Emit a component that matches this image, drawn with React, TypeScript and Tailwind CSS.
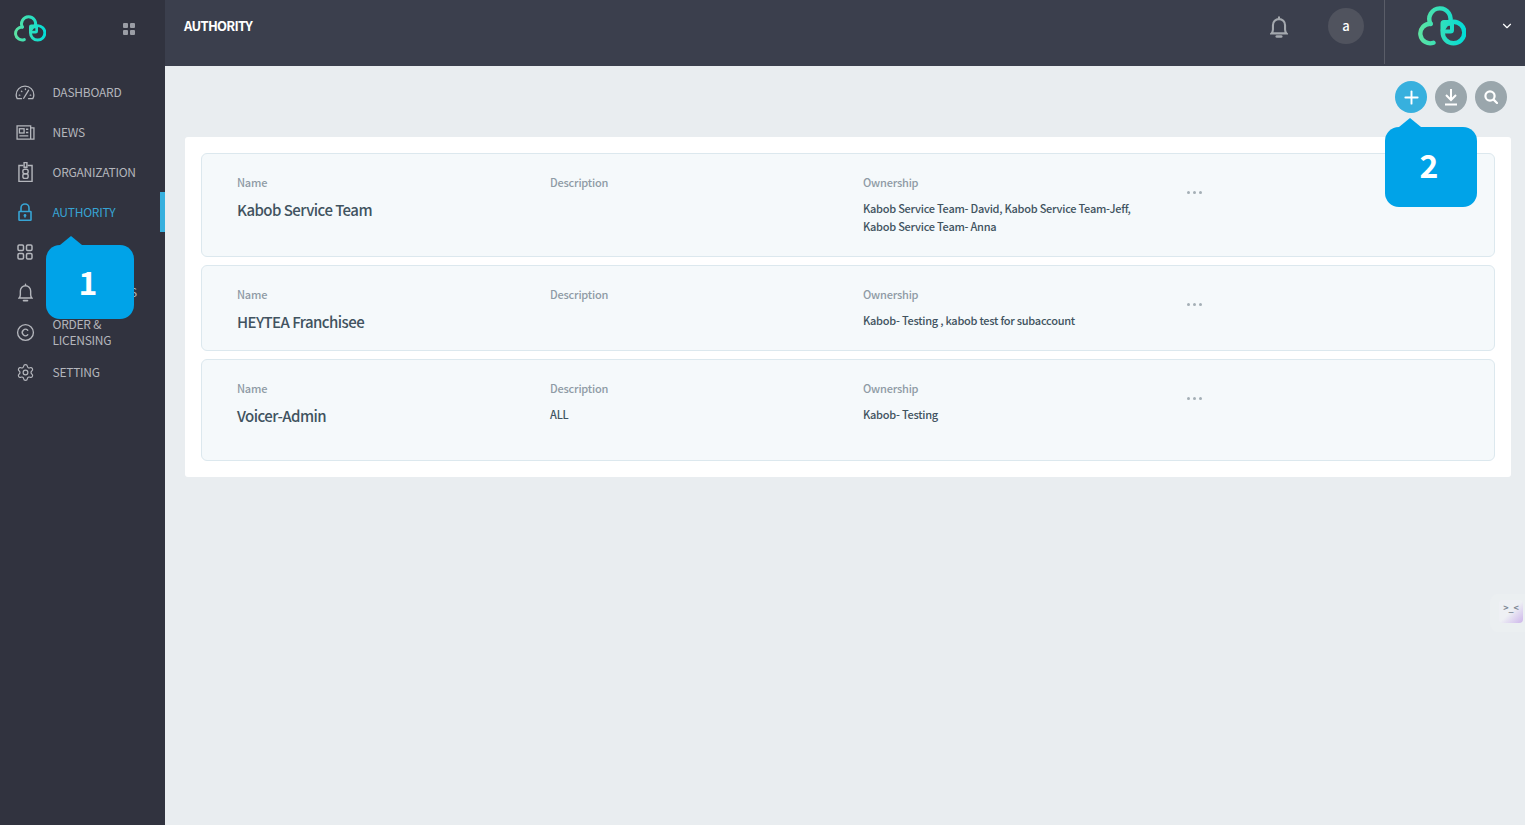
import { ChevronDown, Copyright, Plus, Settings } from "lucide-react";
import type { ReactNode } from "react";

function Logo({ className, id }: { className: string; id: string }) {
  return (
    <svg viewBox="0 0 48 40" fill="none" className={className}>
      <defs>
        <linearGradient id={id} gradientUnits="userSpaceOnUse" x1="0" y1="20" x2="48" y2="20">
          <stop offset="0" stopColor="#5fe3a1" />
          <stop offset="1" stopColor="#00dcd8" />
        </linearGradient>
      </defs>
      <g stroke={`url(#${id})`} strokeWidth="4.4" strokeLinecap="round">
        <path d="M12.6 18A10.6 10.6 0 1 1 31.5 17.5" />
        <circle cx="35.5" cy="26.5" r="10.8" />
        <rect x="24.5" y="16" width="9.5" height="9.5" rx="1.5" strokeWidth="4" />
        <path d="M12.6 17.7A9.8 9.8 0 1 0 15.5 36.7" />
      </g>
    </svg>
  );
}

const GaugeIcon = () => (
  <svg viewBox="0 0 22 17" fill="none" stroke="currentColor" strokeWidth="1.5" strokeLinecap="round" className="h-[15px] w-[20px]">
    <path d="M7 15.5H2.2C1.4 14.2 1 12.8 1 11.2 1 5.6 5.4 1.2 11 1.2s10 4.4 10 10c0 1.6-.4 3-1.2 4.3H15" />
    <path d="M9.5 15l5.5-9M4.5 11.5h.6M7 7l.4.4M11.5 4.5v.6M17.5 11.5h-.6" />
  </svg>
);

const NewsIcon = () => (
  <svg viewBox="0 0 20 16" fill="none" stroke="currentColor" strokeWidth="1.4" className="h-[15px] w-[19px]">
    <path d="M1 1h14.5v14H1zM15.5 3H19v12h-3.5" />
    <rect x="3.5" y="4" width="5" height="4.5" />
    <path d="M10.5 4.5h2.5M10.5 8h2.5M3.5 11.5H13" />
  </svg>
);

const BadgeIcon = () => (
  <svg viewBox="0 0 16 22" fill="none" stroke="currentColor" strokeWidth="1.5" className="h-[22px] w-[15px]">
    <path d="M5.5 4H1v17h14V4h-4.5M6.5 1h3v5h-3z" />
    <rect x="5.2" y="8" width="5.6" height="4.8" rx="2" />
    <rect x="5.2" y="12.8" width="5.6" height="5" rx="2" />
  </svg>
);

const LockIcon = () => (
  <svg viewBox="0 0 14 18" fill="none" stroke="currentColor" strokeWidth="1.6" className="h-[18px] w-[14px]">
    <path d="M3 8.5V5a4 4 0 0 1 8 0v3.5" />
    <rect x="1" y="8.5" width="12" height="8.7" rx="0.5" />
    <circle cx="7" cy="12.5" r="1.4" fill="currentColor" stroke="none" />
    <path d="M7 12.5v2.2" strokeWidth="1.2" />
  </svg>
);

const TilesIcon = () => (
  <svg viewBox="0 0 16 16" fill="none" stroke="currentColor" strokeWidth="1.5" className="h-4 w-4">
    <rect x="1" y="1" width="5.5" height="5.5" rx="1.2" />
    <rect x="9.5" y="1" width="5.5" height="5.5" rx="1.2" />
    <rect x="1" y="9.5" width="5.5" height="5.5" rx="1.2" />
    <rect x="9.5" y="9.5" width="5.5" height="5.5" rx="1.2" />
  </svg>
);

function BellIcon({ className, width = 1.5 }: { className: string; width?: number }) {
  return (
    <svg viewBox="0 0 16 20" fill="none" stroke="currentColor" strokeWidth={width} strokeLinecap="round" className={className}>
      <path d="M8 1.2V2.8M1.2 15.8c.9-1 1.3-2 1.3-3.5V8.3a5.5 5.5 0 0 1 11 0v4c0 1.5.4 2.5 1.3 3.5z" />
      <path d="M6 18.6h4" strokeWidth={width + 0.5} />
    </svg>
  );
}

const navItems: { icon: ReactNode; label: ReactNode; active?: boolean }[] = [
  { icon: <GaugeIcon />, label: "DASHBOARD" },
  { icon: <NewsIcon />, label: "NEWS" },
  { icon: <BadgeIcon />, label: "ORGANIZATION" },
  { icon: <LockIcon />, label: "AUTHORITY", active: true },
  { icon: <TilesIcon />, label: "RESOURCE" },
  { icon: <BellIcon className="h-[19px] w-[15px]" />, label: "NOTIFICATIONS" },
  { icon: <Copyright size={19} strokeWidth={1.7} />, label: <>ORDER &amp;<br />LICENSING</> },
  { icon: <Settings size={19} strokeWidth={1.5} />, label: "SETTING" },
];

const roles = [
  {
    name: "Kabob Service Team",
    description: "",
    ownership: (
      <>
        Kabob Service Team- David, Kabob Service Team-Jeff,
        <br />
        Kabob Service Team- Anna
      </>
    ),
    height: "h-[104px]",
  },
  { name: "HEYTEA Franchisee", description: "", ownership: "Kabob- Testing , kabob test for subaccount", height: "h-[86px]" },
  { name: "Voicer-Admin", description: "ALL", ownership: "Kabob- Testing", height: "h-[102px]" },
];

function Callout({ value, className, textClass }: { value: string; className: string; textClass: string }) {
  return (
    <div className={`absolute z-10 flex items-center justify-center rounded-[14px] bg-[#00a3e8] text-[32px] font-bold text-white ${className}`}>
      <div className="absolute -top-[9px] left-[14px] h-0 w-0 border-x-[11px] border-b-[9px] border-x-transparent border-b-[#00a3e8]" />
      <span className={textClass}>{value}</span>
    </div>
  );
}

export default function App() {
  return (
    <div className="relative flex h-[825px] w-[1525px] overflow-hidden bg-[#e9edf0] font-['Noto_Sans_CJK_SC','Noto_Sans',sans-serif]">
      {/* Sidebar */}
      <aside className="w-[165px] shrink-0 bg-[#31333f]">
        <div className="flex h-[72px] items-start justify-between pl-[14px] pr-[30px] pt-[15px]">
          <Logo id="logoSmall" className="h-[27px] w-[32px]" />
          <div className="mt-[8px] grid grid-cols-2 gap-[2px]">
            <span className="h-[5px] w-[5px] rounded-[1px] bg-[#9a9da5]" />
            <span className="h-[5px] w-[5px] rounded-[1px] bg-[#9a9da5]" />
            <span className="h-[5px] w-[5px] rounded-[1px] bg-[#9a9da5]" />
            <span className="h-[5px] w-[5px] rounded-[1px] bg-[#9a9da5]" />
          </div>
        </div>
        <nav>
          {navItems.map((item, i) => (
            <div
              key={i}
              className={`flex h-10 items-center border-r-[5px] pl-[15px] text-[12px] leading-4 tracking-[-0.25px] ${
                item.active ? "border-[#37b0de] text-[#37a4d4]" : "border-transparent text-[#b4b6bc]"
              }`}
            >
              <span className="flex w-[20px] justify-center">{item.icon}</span>
              <span className="ml-[17.5px] whitespace-nowrap">{item.label}</span>
            </div>
          ))}
        </nav>
      </aside>

      <div className="flex min-w-0 flex-1 flex-col">
        {/* Header */}
        <header className="flex h-[66px] items-start bg-[#3b3f4d] pl-[19px]">
          <h1 className="mt-[16px] flex-1 text-[13px] font-bold leading-5 tracking-[-0.7px] text-white">AUTHORITY</h1>
          <BellIcon width={1.9} className="mr-[40px] mt-[16px] h-[22px] w-[18px] text-[#a4a8ae]" />
          <div className="mt-[8px] flex h-9 w-9 items-center justify-center rounded-full bg-[#50535e] text-[13px] font-medium text-white">a</div>
          <div className="ml-[20px] flex h-[64px] w-[141px] border-l border-[#5a5d68]">
            <Logo id="logoLarge" className="ml-[33px] mt-[6px] h-[40px] w-[48px]" />
            <ChevronDown size={14} strokeWidth={2} className="ml-[34px] mt-[19px] text-white" />
          </div>
        </header>

        {/* Content */}
        <main className="pl-[20px] pr-[14px] pt-[15px]">
          <div className="flex justify-end gap-2 pr-[4px]">
            <button className="flex h-8 w-8 items-center justify-center rounded-full bg-[#37b0de] text-white">
              <Plus size={21} strokeWidth={2.2} />
            </button>
            <button className="flex h-8 w-8 items-center justify-center rounded-full bg-[#9aa6ac] text-white">
              <svg viewBox="0 0 16 18" fill="none" stroke="currentColor" strokeWidth="2" className="h-[18px] w-4">
                <path d="M8 1v10M3 7l5 5 5-5M2 16.5h12" />
              </svg>
            </button>
            <button className="flex h-8 w-8 items-center justify-center rounded-full bg-[#9aa6ac] text-white">
              <svg viewBox="0 0 14 14" fill="none" stroke="currentColor" strokeWidth="2.2" strokeLinecap="round" className="h-[14px] w-[14px]">
                <circle cx="6" cy="6" r="4.6" />
                <path d="M9.6 9.6L13 13" />
              </svg>
            </button>
          </div>

          <div className="mt-[24px] flex flex-col gap-2 rounded-[3px] bg-white p-4">
            {roles.map((role) => (
              <div
                key={role.name}
                className={`grid grid-cols-[313px_313px_313px_1fr] rounded-[6px] border border-[#dce8ee] bg-[#f5f9fb] pl-[35px] pt-[19px] ${role.height}`}
              >
                <div>
                  <p className="text-[11px] font-medium leading-[18px] tracking-[-0.2px] text-[#8f9ba5]">Name</p>
                  <p className="mt-[10px] text-[15px] font-medium leading-[18px] tracking-[-0.55px] text-[#41535f]">{role.name}</p>
                </div>
                <div>
                  <p className="text-[11px] font-medium leading-[18px] tracking-[-0.2px] text-[#8f9ba5]">Description</p>
                  <p className="mt-[8px] text-[11px] font-medium leading-[18px] tracking-[-0.2px] text-[#41535f]">{role.description}</p>
                </div>
                <div>
                  <p className="text-[11px] font-medium leading-[18px] tracking-[-0.2px] text-[#8f9ba5]">Ownership</p>
                  <p className="mt-[8px] whitespace-nowrap text-[11px] font-medium leading-[18px] tracking-[-0.26px] text-[#41535f]">{role.ownership}</p>
                </div>
                <div className="flex gap-[3px] pl-[11px] pt-[18px]">
                  <span className="h-[3px] w-[3px] rounded-full bg-[#a5afb6]" />
                  <span className="h-[3px] w-[3px] rounded-full bg-[#a5afb6]" />
                  <span className="h-[3px] w-[3px] rounded-full bg-[#a5afb6]" />
                </div>
              </div>
            ))}
          </div>
        </main>
      </div>

      {/* Guide callouts */}
      <Callout value="1" textClass="-ml-1 -mt-[2px]" className="left-[46px] top-[245px] h-[74px] w-[88px]" />
      <Callout value="2" textClass="-ml-1 -mt-[6px]" className="left-[1385px] top-[127px] h-[80px] w-[92px]" />

      {/* Floating widget */}
      <div className="absolute left-[1490px] top-[594px] flex h-[38px] w-[35px] items-start justify-end rounded-l-[8px] bg-[#ebeff1] pr-[2px]">
        <div className="mt-[6px] flex h-[23px] w-[24px] items-start justify-center rounded-[4px] bg-gradient-to-br from-[#eef0f4] via-[#eef0f4] to-[#cdb5ea] pt-[3px] text-[9px] font-bold leading-none text-[#7e8794]">
          &gt;_&lt;
        </div>
      </div>
    </div>
  );
}
